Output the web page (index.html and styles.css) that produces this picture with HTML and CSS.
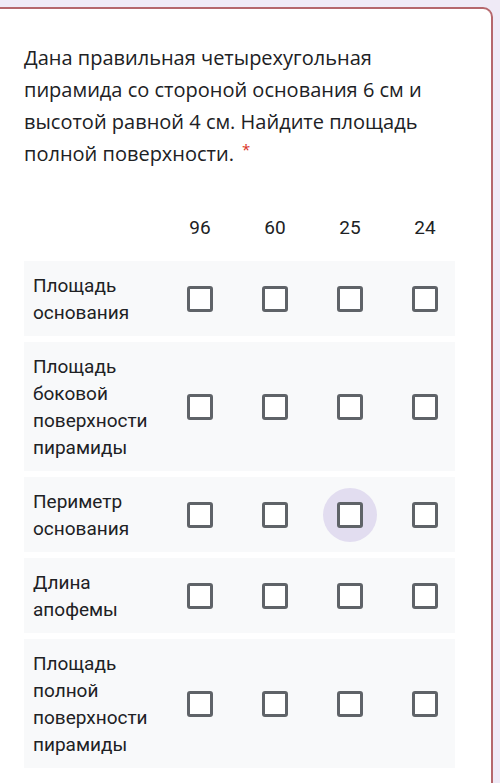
FILE: index.html
```html
<!DOCTYPE html>
<html lang="ru">
<head>
    <meta charset="UTF-8">
    <meta name="viewport" content="width=device-width, initial-scale=1.0">
    <title>Вопрос</title>
    <link rel="stylesheet" href="styles.css">
</head>
<body>
    <div class="question-card">
        <div class="question-title"><span class="title-text">Дана правильная четырехугольная пирамида со стороной основания 6 см и высотой равной 4 см. Найдите площадь полной поверхности.</span><span class="required">*</span></div>

        <div class="grid">
            <div class="grid-row grid-head">
                <div class="row-label"></div>
                <div class="col-head">96</div>
                <div class="col-head">60</div>
                <div class="col-head">25</div>
                <div class="col-head">24</div>
            </div>

            <div class="grid-row">
                <div class="row-label">Площадь основания</div>
                <div class="cell"><span class="checkbox"></span></div>
                <div class="cell"><span class="checkbox"></span></div>
                <div class="cell"><span class="checkbox"></span></div>
                <div class="cell"><span class="checkbox"></span></div>
            </div>

            <div class="grid-row">
                <div class="row-label">Площадь боковой поверхности пирамиды</div>
                <div class="cell"><span class="checkbox"></span></div>
                <div class="cell"><span class="checkbox"></span></div>
                <div class="cell"><span class="checkbox"></span></div>
                <div class="cell"><span class="checkbox"></span></div>
            </div>

            <div class="grid-row">
                <div class="row-label">Периметр основания</div>
                <div class="cell"><span class="checkbox"></span></div>
                <div class="cell"><span class="checkbox"></span></div>
                <div class="cell focused"><span class="checkbox"></span></div>
                <div class="cell"><span class="checkbox"></span></div>
            </div>

            <div class="grid-row">
                <div class="row-label">Длина апофемы</div>
                <div class="cell"><span class="checkbox"></span></div>
                <div class="cell"><span class="checkbox"></span></div>
                <div class="cell"><span class="checkbox"></span></div>
                <div class="cell"><span class="checkbox"></span></div>
            </div>

            <div class="grid-row">
                <div class="row-label">Площадь полной поверхности пирамиды</div>
                <div class="cell"><span class="checkbox"></span></div>
                <div class="cell"><span class="checkbox"></span></div>
                <div class="cell"><span class="checkbox"></span></div>
                <div class="cell"><span class="checkbox"></span></div>
            </div>
        </div>
    </div>
</body>
</html>
```

FILE: styles.css
```css
* {
    margin: 0;
    padding: 0;
    box-sizing: border-box;
}

body {
    background: #efeaf6;
    font-family: Roboto, 'Noto Sans', sans-serif;
    color: #202124;
    overflow: hidden;
}

/* карточка вопроса (левый край за пределами экрана) */
.question-card {
    background: #fff;
    margin: 7px 7px 0 -14px;
    border: 2px solid #b5676c;
    border-bottom: none;
    border-radius: 10px 10px 0 0;
    padding: 33px 24px 20px 36px;
    min-height: 800px;
}

.question-title {
    font-family: 'Open Sans', 'Noto Sans', sans-serif;
    font-size: 20px;
    line-height: 32px;
    color: #202124;
    padding-right: 8px;
}

.required {
    display: inline-block;
    color: #d93025;
    font-size: 15px;
    line-height: 15px;
    margin-left: 8px;
    vertical-align: 6px;
}

.grid {
    margin-top: 37px;
    width: 431px;
}

.grid-row {
    display: grid;
    grid-template-columns: 1fr repeat(4, 60px);
    column-gap: 15px;
    align-items: center;
    background: #f8f9fa;
    padding: 10.5px 0;
    margin-bottom: 6px;
}

.grid-head {
    background: none;
    padding: 0;
    height: 40px;
    margin-bottom: 14px;
}

.col-head {
    text-align: center;
    font-size: 19px;
}

.row-label {
    padding-left: 9px;
    font-size: 19px;
    line-height: 27px;
}

.cell {
    display: flex;
    justify-content: center;
    align-items: center;
    position: relative;
}

.cell.focused::before {
    content: '';
    position: absolute;
    width: 54px;
    height: 54px;
    border-radius: 50%;
    background: #e2ddf0;
}

.checkbox {
    position: relative;
    width: 26px;
    height: 26px;
    border: 3px solid #5f6368;
    border-radius: 3px;
    background: #fff;
}
```
